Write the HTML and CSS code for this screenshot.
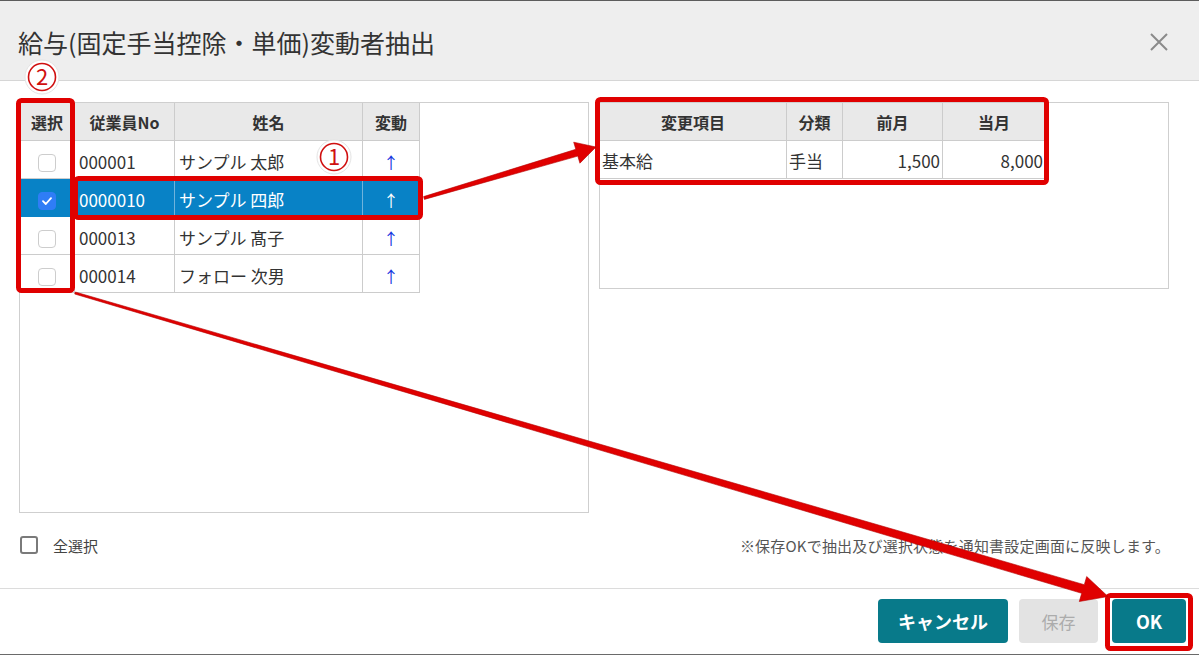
FILE: index.html
```html
<!DOCTYPE html>
<html lang="ja">
<head>
<meta charset="utf-8">
<title>給与(固定手当控除・単価)変動者抽出</title>
<link rel="stylesheet" href="styles.css">
</head>
<body>
<div class="dialog">
  <header class="dialog-head">
    <h1 class="dialog-title">給与(固定手当控除・単価)変動者抽出</h1>
    <button class="close-btn" type="button" aria-label="閉じる">
      <svg width="18" height="18" viewBox="0 0 18 18"><path d="M1 1L17 17M17 1L1 17" stroke="#8a8a8a" stroke-width="2" fill="none"/></svg>
    </button>
  </header>

  <main class="dialog-body">
    <div class="panels">
      <section class="panel panel-employees">
        <table class="grid emp-grid">
          <colgroup>
            <col class="w-check"><col class="w-no"><col class="w-name"><col class="w-diff">
          </colgroup>
          <thead>
            <tr><th>選択</th><th>従業員No</th><th>姓名</th><th>変動</th></tr>
          </thead>
          <tbody>
            <tr>
              <td class="c-check"><span class="cb"></span></td>
              <td>000001</td>
              <td class="c-name">サンプル 太郎</td>
              <td class="c-up">↑</td>
            </tr>
            <tr class="is-selected">
              <td class="c-check"><span class="cb is-checked"><svg width="10" height="8" viewBox="0 0 10 8"><path d="M1 4.2L3.8 7L9 1.2" stroke="#fff" stroke-width="1.8" fill="none" stroke-linecap="round" stroke-linejoin="round"/></svg></span></td>
              <td>0000010</td>
              <td class="c-name">サンプル 四郎</td>
              <td class="c-up">↑</td>
            </tr>
            <tr>
              <td class="c-check"><span class="cb"></span></td>
              <td>000013</td>
              <td class="c-name">サンプル 髙子</td>
              <td class="c-up">↑</td>
            </tr>
            <tr>
              <td class="c-check"><span class="cb"></span></td>
              <td>000014</td>
              <td class="c-name">フォロー 次男</td>
              <td class="c-up">↑</td>
            </tr>
          </tbody>
        </table>
      </section>

      <section class="panel panel-changes">
        <table class="grid chg-grid">
          <colgroup>
            <col class="w-item"><col class="w-kind"><col class="w-prev"><col class="w-cur">
          </colgroup>
          <thead>
            <tr><th>変更項目</th><th>分類</th><th>前月</th><th>当月</th></tr>
          </thead>
          <tbody>
            <tr>
              <td class="c-name">基本給</td>
              <td class="c-name">手当</td>
              <td class="c-num">1,500</td>
              <td class="c-num">8,000</td>
            </tr>
          </tbody>
        </table>
      </section>
    </div>

    <div class="options-row">
      <label class="select-all"><span class="cb-lg"></span>全選択</label>
      <p class="note">※保存OKで抽出及び選択状態を通知書設定画面に反映します。</p>
    </div>
  </main>

  <footer class="dialog-foot">
    <button class="btn btn-primary btn-cancel" type="button">キャンセル</button>
    <button class="btn btn-disabled btn-save" type="button">保存</button>
    <button class="btn btn-primary btn-ok" type="button">OK</button>
  </footer>

  <!-- instructional callouts drawn over the dialog -->
  <svg class="callouts" width="1199" height="655" viewBox="0 0 1199 655">
    <g fill="none" stroke="#e00000" stroke-width="5" stroke-linejoin="round">
      <rect x="18.5" y="100.5" width="54" height="190" rx="3"/>
      <rect x="75.5" y="178.5" width="345" height="39" rx="3"/>
      <rect x="597.5" y="99.5" width="449" height="83" rx="3"/>
      <rect x="1107.5" y="595.5" width="83" height="53" rx="3"/>
    </g>
    <g fill="#e00000" stroke="#b30000" stroke-width="0.6" stroke-linejoin="round">
      <polygon points="423.6,196.6 575.8,149.3 573.7,142.2 596,147 579.9,163.2 577.8,156.1 424.4,199.4"/>
      <polygon points="75.3,292 1084.3,584.7 1086.7,576.5 1108,596.5 1079.3,601.5 1081.7,593.3 74.7,294"/>
    </g>
    <g class="badge">
      <circle cx="42" cy="77" r="17" fill="#fff" stroke="#e4e4e4" stroke-width="1"/>
      <circle cx="42" cy="77" r="13.5" fill="none" stroke="#d01010" stroke-width="1.6"/>
      <text x="42" y="85" text-anchor="middle" class="badge-num">2</text>
      <circle cx="334" cy="157" r="17" fill="#fff" stroke="#e4e4e4" stroke-width="1"/>
      <circle cx="334" cy="157" r="13.5" fill="none" stroke="#d01010" stroke-width="1.6"/>
      <text x="334" y="165" text-anchor="middle" class="badge-num">1</text>
    </g>
  </svg>
</div>
</body>
</html>
```

FILE: styles.css
```css
* {
  box-sizing: border-box;
}

html,
body {
  margin: 0;
  padding: 0;
}

body {
  width: 1199px;
  height: 655px;
  overflow: hidden;
  background: #fff;
  font-family: "Noto Sans CJK JP", "Noto Sans", sans-serif;
  color: #333;
}

/* dialog frame */
.dialog {
  position: relative;
  width: 1199px;
  height: 655px;
  display: flex;
  flex-direction: column;
  border-top: 1px solid #5c5c5c;
  background: #fff;
}

.dialog-head {
  flex: none;
  height: 80px;
  display: flex;
  align-items: center;
  justify-content: space-between;
  padding: 2px 31px 0 18px;
  background: #eeeeee;
  border-bottom: 1px solid #d6d6d6;
}

.dialog-title {
  margin: 0;
  font-size: 25px;
  font-weight: 400;
  color: #333;
}

.close-btn {
  width: 18px;
  height: 18px;
  padding: 0;
  border: 0;
  background: none;
  display: flex;
}

.dialog-body {
  flex: none;
  height: 507px;
  display: flex;
  flex-direction: column;
  padding: 21px 29px 0 19px;
}

.panels {
  display: flex;
  align-items: flex-start;
  gap: 10px;
}

.panel {
  border: 1px solid #cfcfcf;
  background: #fff;
}

.panel-employees {
  width: 570px;
  height: 411px;
}

.panel-changes {
  width: 570px;
  height: 187px;
}

/* data grids */
.grid {
  border-collapse: separate;
  border-spacing: 0;
  table-layout: fixed;
  font-size: 17px;
  color: #333;
}

.emp-grid {
  width: 400px;
}

.chg-grid {
  width: 446px;
}

.w-check { width: 55px; }
.w-no { width: 100px; }
.w-name { width: 188px; }
.w-diff { width: 57px; }

.w-item { width: 187px; }
.w-kind { width: 56px; }
.w-prev { width: 100px; }
.w-cur { width: 103px; }

.grid th {
  height: 38px;
  padding: 0 4px;
  background: #e9e9e9;
  font-size: 16px;
  font-weight: 700;
  text-align: center;
  border-right: 1px solid #cccccc;
  border-bottom: 1px solid #cccccc;
}

.grid td {
  height: 38px;
  padding: 4px 4px 0;
  white-space: nowrap;
  border-right: 1px solid #cccccc;
  border-bottom: 1px solid #cccccc;
}

.chg-grid td {
  padding: 2px 2px 0;
}

.grid .c-name {
  font-size: 17px;
}

.grid .c-num {
  text-align: right;
}

.grid .c-check {
  text-align: center;
  padding: 2px 0 0;
}

.grid .c-up {
  text-align: center;
  color: #1736e0;
  font-size: 16px;
}

.grid tr.is-selected td {
  background: #0882c6;
  color: #fff;
  border-right-color: #6fb3dc;
  border-bottom-color: #0882c6;
}

.grid tr.is-selected .c-up {
  color: #fff;
}

.cb {
  display: inline-flex;
  align-items: center;
  justify-content: center;
  width: 18px;
  height: 18px;
  border: 1px solid #cdcdcd;
  border-radius: 4px;
  background: #fff;
  vertical-align: middle;
}

.cb.is-checked {
  background: #2f7df6;
  border-color: #2f7df6;
}

/* select-all + note */
.options-row {
  display: flex;
  align-items: center;
  justify-content: space-between;
  height: 30px;
  margin-top: 17px;
}

.select-all {
  display: flex;
  align-items: center;
  gap: 15px;
  padding-left: 1px;
  font-size: 15px;
  color: #444;
}

.cb-lg {
  width: 18px;
  height: 18px;
  border: 2px solid #7a7a7a;
  border-radius: 3px;
}

.note {
  margin: 0;
  font-size: 15px;
  letter-spacing: 0.2px;
  color: #555;
}

/* footer buttons */
.dialog-foot {
  flex: 1;
  display: flex;
  align-items: flex-start;
  justify-content: flex-end;
  gap: 11px;
  padding: 10px 13px 0 0;
  border-top: 1px solid #dcdcdc;
  border-bottom: 1px solid #6a6a6a;
}

.btn {
  height: 44px;
  border: 0;
  border-radius: 4px;
  font-family: inherit;
  font-size: 18px;
  font-weight: 700;
  padding: 0;
}

.btn-primary {
  background: #087a8a;
  color: #fff;
}

.btn-disabled {
  background: #e3e3e3;
  color: #acacac;
  font-weight: 400;
  font-size: 17px;
}

.btn-cancel { width: 130px; }
.btn-save { width: 79px; }
.btn-ok {
  width: 74px;
  margin-left: 3px;
}

/* callout overlay */
.callouts {
  position: absolute;
  top: -1px;
  left: 0;
  pointer-events: none;
}

.badge-num {
  font-family: "Noto Sans CJK JP", "Noto Sans", sans-serif;
  font-size: 22px;
  fill: #d01010;
}
```
